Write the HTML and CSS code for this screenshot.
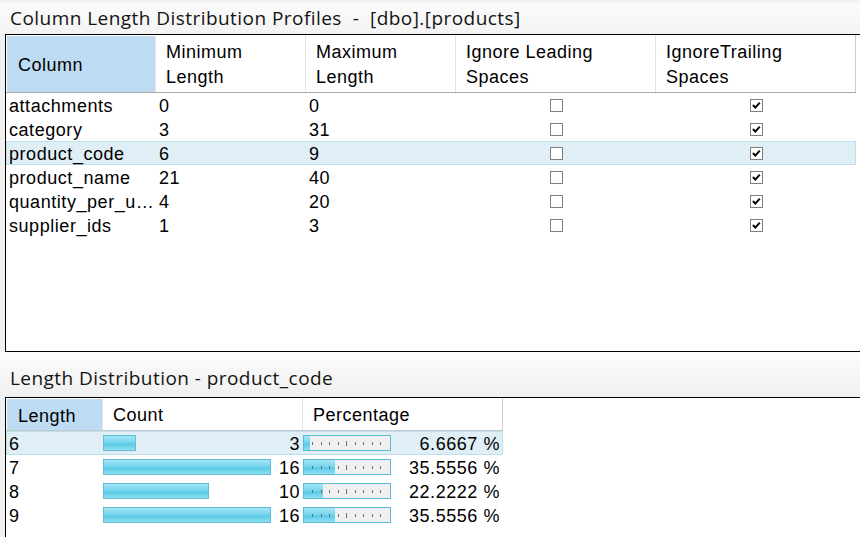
FILE: index.html
```html
<!DOCTYPE html>
<html>
<head>
<meta charset="utf-8">
<link rel="stylesheet" href="styles.css">
</head>
<body>
<div class="page">
  <div class="caption caption-top">Column Length Distribution Profiles  -  [dbo].[products]</div>
  <div class="panel panel-top">
    <div class="grid-head cols5">
      <div class="hcell sel">Column</div>
      <div class="hcell">Minimum<br>Length</div>
      <div class="hcell">Maximum<br>Length</div>
      <div class="hcell">Ignore Leading<br>Spaces</div>
      <div class="hcell last">IgnoreTrailing<br>Spaces</div>
    </div>
    <div class="row cols5"><div class="cell">attachments</div><div class="cell">0</div><div class="cell">0</div><div class="cell ctr"><svg class="cb" viewBox="0 0 13 13"><rect x=".5" y=".5" width="12" height="12" fill="#fff" stroke="#7f7f7f"/></svg></div><div class="cell ctr"><svg class="cb" viewBox="0 0 13 13"><rect x=".5" y=".5" width="12" height="12" fill="#fff" stroke="#7f7f7f"/><path d="M3 6 L5.3 8.6 L9.8 3.6" stroke="#000" stroke-width="1.9" fill="none"/></svg></div></div>
    <div class="row cols5"><div class="cell">category</div><div class="cell">3</div><div class="cell">31</div><div class="cell ctr"><svg class="cb" viewBox="0 0 13 13"><rect x=".5" y=".5" width="12" height="12" fill="#fff" stroke="#7f7f7f"/></svg></div><div class="cell ctr"><svg class="cb" viewBox="0 0 13 13"><rect x=".5" y=".5" width="12" height="12" fill="#fff" stroke="#7f7f7f"/><path d="M3 6 L5.3 8.6 L9.8 3.6" stroke="#000" stroke-width="1.9" fill="none"/></svg></div></div>
    <div class="row cols5 hl"><div class="cell">product_code</div><div class="cell">6</div><div class="cell">9</div><div class="cell ctr"><svg class="cb" viewBox="0 0 13 13"><rect x=".5" y=".5" width="12" height="12" fill="#fff" stroke="#7f7f7f"/></svg></div><div class="cell ctr"><svg class="cb" viewBox="0 0 13 13"><rect x=".5" y=".5" width="12" height="12" fill="#fff" stroke="#7f7f7f"/><path d="M3 6 L5.3 8.6 L9.8 3.6" stroke="#000" stroke-width="1.9" fill="none"/></svg></div></div>
    <div class="row cols5"><div class="cell">product_name</div><div class="cell">21</div><div class="cell">40</div><div class="cell ctr"><svg class="cb" viewBox="0 0 13 13"><rect x=".5" y=".5" width="12" height="12" fill="#fff" stroke="#7f7f7f"/></svg></div><div class="cell ctr"><svg class="cb" viewBox="0 0 13 13"><rect x=".5" y=".5" width="12" height="12" fill="#fff" stroke="#7f7f7f"/><path d="M3 6 L5.3 8.6 L9.8 3.6" stroke="#000" stroke-width="1.9" fill="none"/></svg></div></div>
    <div class="row cols5"><div class="cell">quantity_per_u…</div><div class="cell">4</div><div class="cell">20</div><div class="cell ctr"><svg class="cb" viewBox="0 0 13 13"><rect x=".5" y=".5" width="12" height="12" fill="#fff" stroke="#7f7f7f"/></svg></div><div class="cell ctr"><svg class="cb" viewBox="0 0 13 13"><rect x=".5" y=".5" width="12" height="12" fill="#fff" stroke="#7f7f7f"/><path d="M3 6 L5.3 8.6 L9.8 3.6" stroke="#000" stroke-width="1.9" fill="none"/></svg></div></div>
    <div class="row cols5"><div class="cell">supplier_ids</div><div class="cell">1</div><div class="cell">3</div><div class="cell ctr"><svg class="cb" viewBox="0 0 13 13"><rect x=".5" y=".5" width="12" height="12" fill="#fff" stroke="#7f7f7f"/></svg></div><div class="cell ctr"><svg class="cb" viewBox="0 0 13 13"><rect x=".5" y=".5" width="12" height="12" fill="#fff" stroke="#7f7f7f"/><path d="M3 6 L5.3 8.6 L9.8 3.6" stroke="#000" stroke-width="1.9" fill="none"/></svg></div></div>
  </div>
  <div class="caption caption-mid">Length Distribution - product_code</div>
  <div class="panel panel-bottom">
    <div class="grid-head cols3 short">
      <div class="hcell sel">Length</div>
      <div class="hcell">Count</div>
      <div class="hcell last">Percentage</div>
    </div>
    <div class="row cols3 hl">
      <div class="cell">6</div>
      <div class="cell count"><div class="cbar" style="width:33px"></div><span class="num">3</span></div>
      <div class="cell pct"><div class="pbar"><div class="pfill" style="width:6px"></div><svg class="ticks" viewBox="0 0 86 14"><path d="M8.5 6v3M17.5 6v3M25.5 6v3M34.5 6v3M42.5 5v5M51.5 6v3M59.5 6v3M68.5 6v3M76.5 6v3" stroke="#6d6d6d" stroke-width="1"/></svg></div><span class="num">6.6667 %</span></div>
    </div>
    <div class="row cols3">
      <div class="cell">7</div>
      <div class="cell count"><div class="cbar" style="width:168px"></div><span class="num">16</span></div>
      <div class="cell pct"><div class="pbar"><div class="pfill" style="width:31px"></div><svg class="ticks" viewBox="0 0 86 14"><path d="M8.5 6v3M17.5 6v3M25.5 6v3M34.5 6v3M42.5 5v5M51.5 6v3M59.5 6v3M68.5 6v3M76.5 6v3" stroke="#6d6d6d" stroke-width="1"/></svg></div><span class="num">35.5556 %</span></div>
    </div>
    <div class="row cols3">
      <div class="cell">8</div>
      <div class="cell count"><div class="cbar" style="width:106px"></div><span class="num">10</span></div>
      <div class="cell pct"><div class="pbar"><div class="pfill" style="width:19px"></div><svg class="ticks" viewBox="0 0 86 14"><path d="M8.5 6v3M17.5 6v3M25.5 6v3M34.5 6v3M42.5 5v5M51.5 6v3M59.5 6v3M68.5 6v3M76.5 6v3" stroke="#6d6d6d" stroke-width="1"/></svg></div><span class="num">22.2222 %</span></div>
    </div>
    <div class="row cols3">
      <div class="cell">9</div>
      <div class="cell count"><div class="cbar" style="width:168px"></div><span class="num">16</span></div>
      <div class="cell pct"><div class="pbar"><div class="pfill" style="width:31px"></div><svg class="ticks" viewBox="0 0 86 14"><path d="M8.5 6v3M17.5 6v3M25.5 6v3M34.5 6v3M42.5 5v5M51.5 6v3M59.5 6v3M68.5 6v3M76.5 6v3" stroke="#6d6d6d" stroke-width="1"/></svg></div><span class="num">35.5556 %</span></div>
    </div>
  </div>
</div>
</body>
</html>
```
FILE: styles.css
```css
html, body {
  margin: 0;
  padding: 0;
  height: 100%;
  overflow: hidden;
}
body {
  background: #f0f0f0;
  font-family: "Liberation Sans", Arial, sans-serif;
  color: #000;
}
.page {
  display: flex;
  flex-direction: column;
  height: 537px;
  width: 860px;
}
.caption {
  font-family: "Open Sans", "Noto Sans", sans-serif;
  font-size: 19px;
  letter-spacing: 0.45px;
  color: #141414;
  white-space: pre;
  padding-left: 10px;
  display: flex;
  align-items: center;
  background: linear-gradient(#fcfcfc, #f0f0f0);
}
.caption-top {
  height: 34px;
  padding-top: 2px;
  box-sizing: border-box;
  background: linear-gradient(#f0f0f0 0, #fbfbfb 4px, #f3f3f3 100%);
}
.caption-mid {
  height: 45px;
  padding-top: 7px;
  box-sizing: border-box;
}
.panel {
  margin-left: 5px;
  background: #fff;
  border-left: 1px solid #000;
  border-top: 1px solid #000;
}
.panel-top {
  height: 316px;
  border-bottom: 1px solid #000;
}
.panel-bottom {
  flex: 1;
}
.cols5 {
  display: grid;
  grid-template-columns: 150px 150px 150px 200px 200px;
  width: 850px;
}
.cols3 {
  display: grid;
  grid-template-columns: 97px 200px 200px;
  width: 497px;
}
.grid-head {
  height: 58px;
  border-bottom: 1px solid #a9a9a9;
  box-sizing: border-box;
  font-size: 18px;
  letter-spacing: 0.5px;
  line-height: 25px;
}
.grid-head.short {
  height: 33px;
  border-bottom-color: #c9c9c9;
}
.hcell {
  border-right: 1px solid #e3e3e3;
  padding-left: 10px;
  padding-top: 3px;
  display: flex;
  align-items: center;
  color: #000;
}
.hcell.last {
  border-right-color: #cdcdcd;
}
.hcell.sel {
  background: #bddcf3;
  border-top: 1px solid #fff;
  border-left: 1px solid #fff;
  padding-left: 11px;
}
.row {
  height: 24px;
  font-size: 18px;
  letter-spacing: 0.55px;
  align-items: center;
}
.row.hl {
  background: #e0eff5;
  box-shadow: inset 0 0 0 1px #bcdfed;
}
.cell {
  padding-left: 3px;
  padding-top: 2px;
  box-sizing: border-box;
  white-space: nowrap;
  overflow: hidden;
  height: 24px;
  display: flex;
  align-items: center;
}
.cell.ctr {
  justify-content: center;
  padding-left: 0;
  padding-top: 0;
}
.cb {
  width: 13px;
  height: 13px;
  display: block;
}
.cell.count {
  padding-left: 0;
  padding-right: 3px;
}
.cbar {
  box-sizing: border-box;
  height: 16px;
  margin-top: -2px;
  border: 1px solid #64bcd6;
  background: linear-gradient(#a3e6f6 0%, #7fd8ef 40%, #5ccbe8 60%, #8fdff2 100%);
  flex: none;
}
.num {
  margin-left: auto;
}
.cell.pct {
  padding-left: 0;
  padding-right: 3px;
}
.pbar {
  position: relative;
  width: 86px;
  height: 14px;
  margin-top: -2px;
  border: 1px solid #5bbcd6;
  background: #f0f0f0;
  flex: none;
}
.pfill {
  height: 14px;
  background: linear-gradient(#a3e6f6 0%, #7fd8ef 40%, #5ccbe8 60%, #8fdff2 100%);
}
.ticks {
  position: absolute;
  left: 0;
  top: 0;
  width: 86px;
  height: 14px;
}
```
